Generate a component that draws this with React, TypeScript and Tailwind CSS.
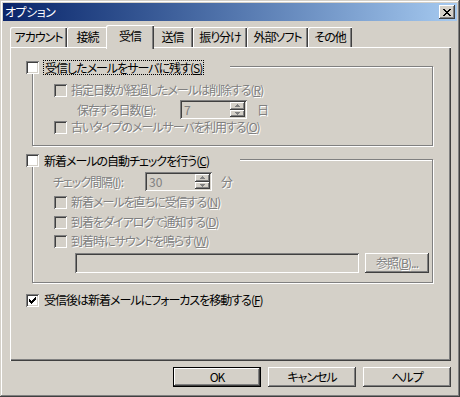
import React from 'react';

// classic 3D edges
const RAISED =
  'shadow-[inset_-1px_-1px_#404040,inset_1px_1px_#fff,inset_-2px_-2px_#808080]';
const SUNKEN =
  'shadow-[inset_1px_1px_#808080,inset_-1px_-1px_#fff,inset_2px_2px_#404040,inset_-2px_-2px_#d4d0c8]';
const ETCHED = 'border border-[#808080] shadow-[inset_1px_1px_#fff,1px_1px_#fff]';
const DISABLED_TEXT = 'text-[#808080] [text-shadow:1px_1px_0_#fff]';

const CheckMark = () => (
  <svg width="7" height="7" viewBox="0 0 7 7" shapeRendering="crispEdges">
    <path
      fill="#000"
      d="M6 0h1v1h-1z M5 1h2v1h-2z M0 2h1v1h-1z M4 2h3v1h-3z M0 3h2v1h-2z M3 3h3v1h-3z M0 4h5v1h-5z M1 5h3v1h-3z M2 6h1v1h-1z"
    />
  </svg>
);

const Checkbox: React.FC<{ checked?: boolean; disabled?: boolean }> = ({ checked, disabled }) => (
  <span
    className={`flex h-[13px] w-[13px] shrink-0 items-center justify-center ${
      disabled ? 'bg-[#d4d0c8]' : 'bg-white'
    } ${SUNKEN}`}
  >
    {checked && <CheckMark />}
  </span>
);

// mnemonic label like 受信する(<u>R</u>)
const Label: React.FC<{ text: string; hotkey: string; tail?: string; disabled?: boolean }> = ({
  text,
  hotkey,
  tail = ')',
  disabled
}) => (
  <span className={`whitespace-nowrap ${disabled ? DISABLED_TEXT : 'text-black'}`}>
    {text}(<span className="underline underline-offset-[1px]">{hotkey}</span>
    {tail}
  </span>
);

const Arrow: React.FC<{ up?: boolean }> = ({ up }) => (
  <svg width="5" height="3" viewBox="0 0 5 3" shapeRendering="crispEdges">
    <path
      fill="#808080"
      d={up ? 'M2 0h1v1h-1z M1 1h3v1h-3z M0 2h5v1h-5z' : 'M0 0h5v1h-5z M1 1h3v1h-3z M2 2h1v1h-1z'}
    />
  </svg>
);

const SpinEdit: React.FC<{ value: string }> = ({ value }) => (
  <div className={`flex h-[19px] w-[67px] bg-[#d4d0c8] p-[2px] ${SUNKEN}`}>
    <span className="flex-1 pl-[2px] text-[12px] leading-[15px] tracking-normal text-[#808080]">{value}</span>
    <div className="flex w-[15px] flex-col">
      <span className={`flex flex-1 items-center justify-center bg-[#d4d0c8] ${RAISED}`}>
        <Arrow up />
      </span>
      <span className={`flex flex-1 items-center justify-center bg-[#d4d0c8] ${RAISED}`}>
        <Arrow />
      </span>
    </div>
  </div>
);

const CheckRow: React.FC<{ children: React.ReactNode; className?: string }> = ({
  children,
  className = ''
}) => (
  <div className={`flex h-[16px] items-center gap-[4px] pl-[21px] ${className}`}>
    <Checkbox disabled />
    {children}
  </div>
);

const PushButton: React.FC<{ children: React.ReactNode; isDefault?: boolean; disabled?: boolean; className?: string }> = ({
  children,
  isDefault,
  disabled,
  className = ''
}) => (
  <div
    className={`flex h-[20px] items-center justify-center bg-[#d4d0c8] ${
      isDefault
        ? 'shadow-[inset_0_0_0_1px_#000,inset_-2px_-2px_#404040,inset_2px_2px_#fff,inset_-3px_-3px_#808080]'
        : RAISED
    } ${disabled ? DISABLED_TEXT : 'text-black'} ${className}`}
  >
    {children}
  </div>
);

const tabs = [
  { label: 'アカウント', w: 'w-[57px]' },
  { label: '接続', w: 'w-[41px]' },
  { label: '受信', w: 'w-[44px]', active: true },
  { label: '送信', w: 'w-[41px]' },
  { label: '振り分け', w: 'w-[54px]' },
  { label: '外部ソフト', w: 'w-[61px]' },
  { label: 'その他', w: 'w-[44px]' }
];

const App: React.FC = () => {
  return (
    <div className="h-[397px] w-[460px] bg-[#d4d0c8] p-[3px] text-[12px] leading-[16px] tracking-[-1px] [font-feature-settings:'palt'] font-['Noto_Sans_CJK_JP','Noto_Sans',sans-serif] shadow-[inset_-1px_-1px_#404040,inset_1px_1px_#d4d0c8,inset_-2px_-2px_#808080,inset_2px_2px_#fff]">
      {/* Title bar */}
      <div className="flex h-[18px] items-center justify-between bg-gradient-to-r from-[#0a246a] to-[#a6caf0] pl-[2px] pr-[2px]">
        <span className="text-[12px] leading-[16px] tracking-[-0.5px] text-white">オプション</span>
        <span className={`flex h-[14px] w-[16px] items-center justify-center bg-[#d4d0c8] ${RAISED}`}>
          <svg width="8" height="7" viewBox="0 0 8 7" shapeRendering="crispEdges">
            <path
              fill="#000"
              d="M0 0h2v1h-2z M6 0h2v1h-2z M1 1h2v1h-2z M5 1h2v1h-2z M2 2h4v1h-4z M3 3h2v1h-2z M2 4h4v1h-4z M1 5h2v1h-2z M5 5h2v1h-2z M0 6h2v1h-2z M6 6h2v1h-2z"
            />
          </svg>
        </span>
      </div>

      <div className="ml-[7px] mr-[6px] mt-[4px]">
        {/* Tabs */}
        <div className="flex h-[22px] items-end">
          {tabs.map((t) =>
            t.active ? (
              <div
                key={t.label}
                className="relative z-10 -mx-[2px] -mb-[2px] flex h-[24px] w-[48px] items-start justify-center rounded-tl-[2px] bg-[#d4d0c8] pt-[3px] shadow-[inset_1px_1px_#fff,inset_-1px_0_#404040,inset_-2px_0_#808080] text-black"
              >
                {t.label}
              </div>
            ) : (
              <div
                key={t.label}
                className={`flex h-[20px] ${t.w} items-center justify-center rounded-tl-[2px] bg-[#d4d0c8] shadow-[inset_1px_1px_#fff,inset_-1px_0_#404040,inset_-2px_0_#808080] text-black`}
              >
                {t.label}
              </div>
            )
          )}
        </div>

        {/* Tab panel */}
        <div className="flex h-[314px] flex-col pt-[14px] shadow-[inset_1px_1px_#fff,inset_-1px_-1px_#404040,inset_-2px_-2px_#808080]">
          {/* Group 1 */}
          <div className="ml-[22px] w-[401px]">
            <div className="relative z-10 -ml-[6px] flex h-[13px] w-[204px] items-center gap-[4px] bg-[#d4d0c8]">
              <Checkbox />
              <span className="border border-dotted border-black px-[1px] leading-[13px]">
                <Label text="受信したメールをサーバに残す" hotkey="S" />
              </span>
            </div>
            <div className={`-mt-[8px] flex h-[80px] flex-col ${ETCHED}`}>
              <CheckRow className="mt-[15px]">
                <Label text="指定日数が経過したメールは削除する" hotkey="R" disabled />
              </CheckRow>
              <div className="mt-[2px] flex h-[19px] items-center pl-[44px]">
                <span className={`w-[103px] ${DISABLED_TEXT}`}>
                  保存する日数(<span className="underline underline-offset-[1px]">E</span>):
                </span>
                <SpinEdit value="7" />
                <span className={`ml-[10px] ${DISABLED_TEXT}`}>日</span>
              </div>
              <CheckRow>
                <Label text="古いタイプのメールサーバを利用する" hotkey="O" disabled />
              </CheckRow>
            </div>
          </div>

          {/* Group 2 */}
          <div className="ml-[22px] mt-[8px] w-[401px]">
            <div className="relative z-10 -ml-[6px] flex h-[13px] w-[214px] items-center gap-[5px] bg-[#d4d0c8]">
              <Checkbox />
              <Label text="新着メールの自動チェックを行う" hotkey="C" />
            </div>
            <div className={`-mt-[8px] flex h-[124px] flex-col ${ETCHED}`}>
              <div className="mt-[12px] flex h-[19px] items-center pl-[20px]">
                <span className={`w-[92px] ${DISABLED_TEXT}`}>
                  チェック間隔(<span className="underline underline-offset-[1px]">I</span>):
                </span>
                <SpinEdit value="30" />
                <span className={`ml-[9px] ${DISABLED_TEXT}`}>分</span>
              </div>
              <CheckRow className="mt-[3px]">
                <Label text="新着メールを直ちに受信する" hotkey="N" disabled />
              </CheckRow>
              <CheckRow className="mt-[4px]">
                <Label text="到着をダイアログで通知する" hotkey="D" disabled />
              </CheckRow>
              <CheckRow className="mt-[3px]">
                <Label text="到着時にサウンドを鳴らす" hotkey="W" disabled />
              </CheckRow>
              <div className="mt-[4px] flex items-center gap-[6px] pl-[42px]">
                <div className={`h-[20px] w-[284px] bg-[#d4d0c8] ${SUNKEN}`} />
                <PushButton disabled className="w-[64px]">
                  <Label text="参照" hotkey="B" tail=")..." disabled />
                </PushButton>
              </div>
            </div>
          </div>

          {/* Focus option */}
          <div className="ml-[16px] mt-[9px] flex h-[16px] items-center gap-[5px]">
            <Checkbox checked />
            <Label text="受信後は新着メールにフォーカスを移動する" hotkey="F" />
          </div>
        </div>

        {/* Buttons */}
        <div className="mt-[6px] flex justify-end gap-[7px]">
          <PushButton isDefault className="w-[88px]">OK</PushButton>
          <PushButton className="w-[88px]">キャンセル</PushButton>
          <PushButton className="w-[88px]">ヘルプ</PushButton>
        </div>
      </div>
    </div>
  );
};

export default App;
